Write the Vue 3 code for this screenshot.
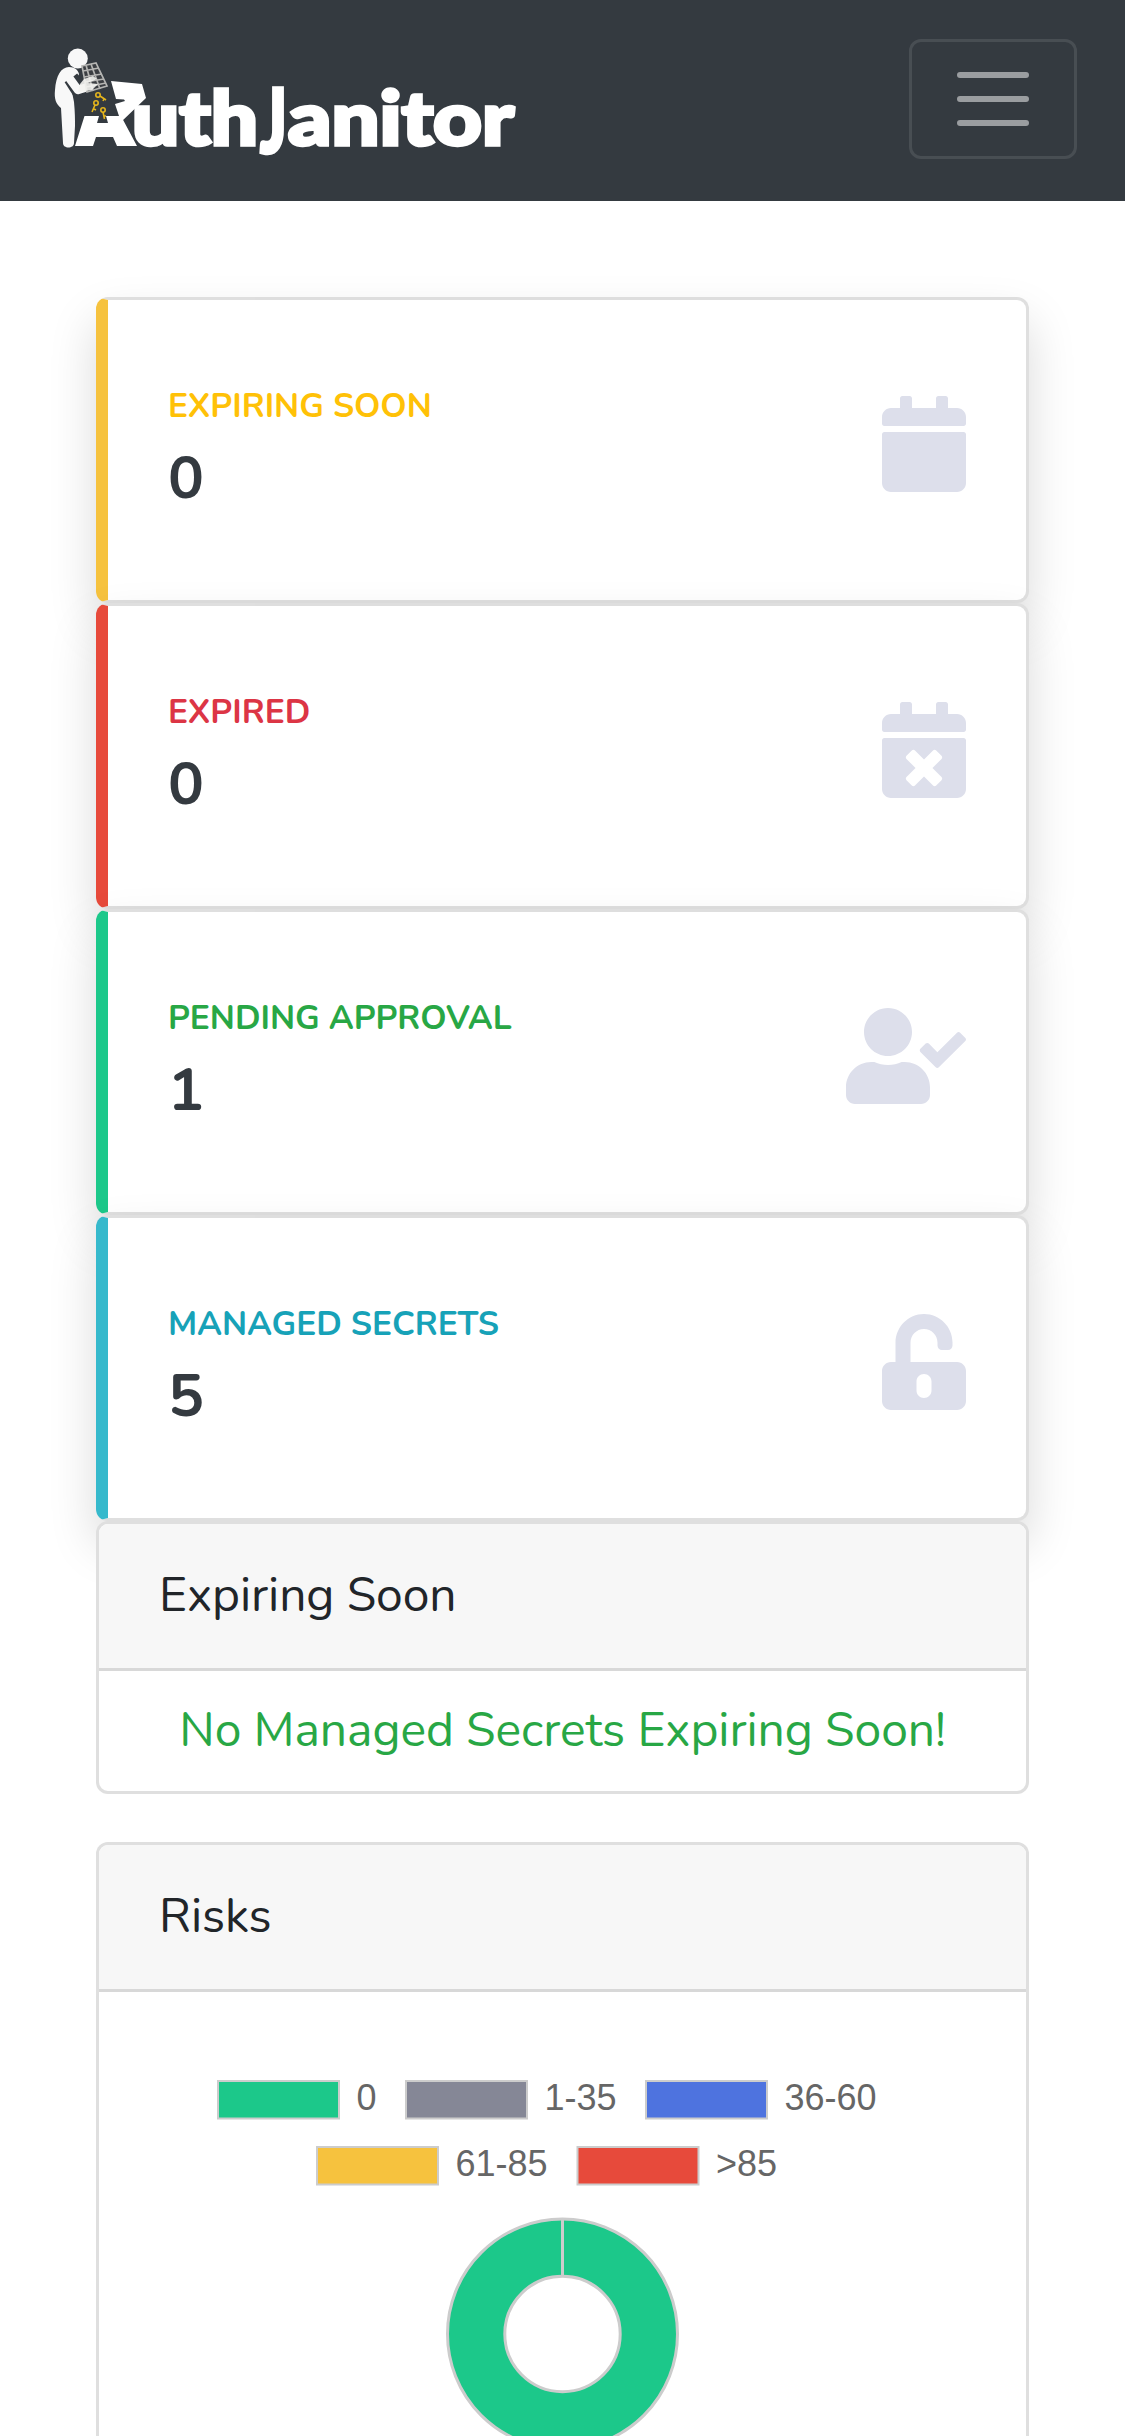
<script setup>
const icons = {
  calendar: 'M12 192h424c6.6 0 12 5.4 12 12v260c0 26.5-21.5 48-48 48H48c-26.5 0-48-21.5-48-48V204c0-6.6 5.4-12 12-12zm436-44v-36c0-26.5-21.5-48-48-48h-48V12c0-6.6-5.4-12-12-12h-40c-6.6 0-12 5.4-12 12v52H160V12c0-6.6-5.4-12-12-12h-40c-6.6 0-12 5.4-12 12v52H48C21.5 64 0 85.5 0 112v36c0 6.6 5.4 12 12 12h424c6.6 0 12-5.4 12-12z',
  calendarTimes: 'M436 160H12c-6.6 0-12-5.4-12-12v-36c0-26.5 21.5-48 48-48h48V12c0-6.6 5.4-12 12-12h40c6.6 0 12 5.4 12 12v52h128V12c0-6.6 5.4-12 12-12h40c6.6 0 12 5.4 12 12v52h48c26.5 0 48 21.5 48 48v36c0 6.6-5.4 12-12 12zM12 192h424c6.6 0 12 5.4 12 12v260c0 26.5-21.5 48-48 48H48c-26.5 0-48-21.5-48-48V204c0-6.6 5.4-12 12-12zm257.3 160l48.1-48.1c4.7-4.7 4.7-12.3 0-17l-28.3-28.3c-4.7-4.7-12.3-4.7-17 0L224 306.7l-48.1-48.1c-4.7-4.7-12.3-4.7-17 0l-28.3 28.3c-4.7 4.7-4.7 12.3 0 17l48.1 48.1-48.1 48.1c-4.7 4.7-4.7 12.3 0 17l28.3 28.3c4.7 4.7 12.3 4.7 17 0l48.1-48.1 48.1 48.1c4.7 4.7 12.3 4.7 17 0l28.3-28.3c4.7-4.7 4.7-12.3 0-17L269.3 352z',
  userCheck: 'M224 256c70.7 0 128-57.3 128-128S294.7 0 224 0 96 57.3 96 128s57.3 128 128 128zm89.6 32h-16.7c-22.2 10.2-46.9 16-72.9 16s-50.6-5.8-72.9-16h-16.7C60.2 288 0 348.2 0 422.4V464c0 26.5 21.5 48 48 48h352c26.5 0 48-21.5 48-48v-41.6c0-74.2-60.2-134.4-134.4-134.4zm323-128.4l-27.8-28.1c-4.6-4.7-12.1-4.7-16.8-.1l-104.8 104-45.5-45.8c-4.6-4.7-12.1-4.7-16.8-.1l-28.1 27.9c-4.7 4.6-4.7 12.1-.1 16.8l81.7 82.3c4.6 4.7 12.1 4.7 16.8.1l141.3-140.2c4.6-4.7 4.7-12.2.1-16.8z',
  unlock: 'M400 256H152V152.9c0-39.6 31.7-72.5 71.3-72.9 40-.4 72.7 32.1 72.7 72v16c0 13.3 10.7 24 24 24h32c13.3 0 24-10.7 24-24v-16C376 68 307.5-.3 223.5 0 139.5.3 72 69.5 72 153.5V256H48c-26.5 0-48 21.5-48 48v160c0 26.5 21.5 48 48 48h352c26.5 0 48-21.5 48-48V304c0-26.5-21.5-48-48-48zM264 408c0 22.1-17.9 40-40 40s-40-17.9-40-40v-48c0-22.1 17.9-40 40-40s40 17.9 40 40v48z',
}
const stats = [
  { label: 'Expiring Soon', value: 0, tone: 'warning', icon: icons.calendar, w: 448 },
  { label: 'Expired', value: 0, tone: 'danger', icon: icons.calendarTimes, w: 448 },
  { label: 'Pending Approval', value: 1, tone: 'success', icon: icons.userCheck, w: 640 },
  { label: 'Managed Secrets', value: 5, tone: 'info', icon: icons.unlock, w: 448 },
]
// chart coordinates are relative to the chart's own viewBox
const legend = [
  { text: '0', color: '#1cc88a', x: 119, y: 89 },
  { text: '1-35', color: '#858796', x: 307, y: 89 },
  { text: '36-60', color: '#4e73df', x: 547, y: 89 },
  { text: '61-85', color: '#f6c23e', x: 218, y: 155 },
  { text: '>85', color: '#e74a3b', x: 478.5, y: 155 },
]
</script>

<template>
  <div class="page">
    <header class="navbar">
      <svg class="brand" width="490" height="180" viewBox="45 15 490 180" role="img" aria-label="AuthJanitor">
        <g fill="#f8f8f8">
          <circle cx="77.8" cy="58.5" r="10" />
          <path d="M55 90C56 76 61 67 69 67C75 67 78 70 79 74L72 92L74 102C75 112 75 120 75 126L74 143C74 149 63 149 63 143L61 108C56 104 54 99 55 90Z" />
        </g>
        <path d="M68 80L76 92.500L97 87M74 76L82 86L95 80" fill="none" stroke="#343a40" stroke-width="8" stroke-linejoin="round" />
        <path d="M70 79L78 90L97 84" fill="none" stroke="#f8f8f8" stroke-width="8.500" stroke-linejoin="round" stroke-linecap="round" />
        <g fill="#3b3e42" stroke="#b5b5b3" stroke-width="1.700">
          <path d="M82 66L96 63L107 86L87 92Z" />
          <path d="M86 65L93 91M91 64L100 89M83 71L99 68M84 77L102 74M85 82L104 79M86 87L106 83" fill="none" />
        </g>
        <path d="M84 79L93 76L97 79L88 83L98 84L92 90L78 92L80 84Z" fill="#f3f3f0" fill-opacity=".9" />
        <path d="M111 81L142 84L146 98L121 122L115 104L125 101L124 99.500L116 99Z" fill="#fff" />
        <path d="M84.500 116H99L97 123H108L106 116H121L137 146H117L113 137H96L93 146H75Z" fill="#fff" />
        <g fill="none" stroke="#e5b51c" stroke-width="1.600">
          <circle cx="98" cy="95" r="2.200" /><path d="M100 96L106 100M104 99L103 101" />
          <circle cx="96" cy="103" r="2.200" /><path d="M95 105L92 112M94 109L96 110" />
          <circle cx="103" cy="110" r="2.200" /><path d="M103 112L104.500 119M104 116L106 116" />
        </g>
        <g class="wordmark">
          <text y="145" x="132" font-size="75" textLength="126" lengthAdjust="spacingAndGlyphs">uth</text>
          <text y="153" x="260" font-size="90" textLength="27" lengthAdjust="spacingAndGlyphs">J</text>
          <text y="145" x="288" font-size="75" textLength="226" lengthAdjust="spacingAndGlyphs">anitor</text>
        </g>
      </svg>
      <button class="toggler" aria-label="Toggle navigation">
        <span></span><span></span><span></span>
      </button>
    </header>

    <main class="content">
      <section v-for="s in stats" :key="s.label" class="card stat" :class="s.tone">
        <div>
          <div class="label">{{ s.label }}</div>
          <div class="value">{{ s.value }}</div>
        </div>
        <svg class="icon" :viewBox="`0 0 ${s.w} 512`"><path :d="s.icon" /></svg>
      </section>

      <section class="card">
        <h2 class="card-header">Expiring Soon</h2>
        <p class="empty">No Managed Secrets Expiring Soon!</p>
      </section>

      <section class="card risks">
        <h2 class="card-header">Risks</h2>
        <svg class="chart" width="927" height="480" viewBox="0 0 927 480">
          <g v-for="l in legend" :key="l.text">
            <rect :x="l.x" :y="l.y" width="121" height="37.500" :fill="l.color" stroke="#ccc" stroke-width="2" />
            <text :x="l.x + 138.500" :y="l.y + 29">{{ l.text }}</text>
          </g>
          <g fill="none" stroke="#ccc" stroke-width="3">
            <circle cx="463.500" cy="342" r="86.300" stroke="#1cc88a" stroke-width="57" />
            <circle cx="463.500" cy="342" r="115" />
            <circle cx="463.500" cy="342" r="57.700" />
            <path d="M463.500 227V284" />
          </g>
        </svg>
      </section>
    </main>
  </div>
</template>

<style>
body { margin: 0; background: #fff; }
</style>

<style scoped>
.page { height: 2436px; overflow: hidden; font-family: Nunito, Lato, "Noto Sans", sans-serif; color: #212529; }
.navbar { box-sizing: border-box; height: 201px; padding: 15px 48px 0 45px; display: flex; justify-content: space-between; align-items: flex-start; background: #343a40; }
.brand { display: block; }
.wordmark { font-family: Lato, sans-serif; font-weight: 900; fill: #fff; stroke: #fff; stroke-width: 3.5; stroke-linejoin: miter; }
.toggler { box-sizing: border-box; width: 168px; height: 120px; margin-top: 24px; padding: 0; display: flex; flex-direction: column; align-items: center; justify-content: center; gap: 18px; background: none; border: 3px solid rgba(255, 255, 255, .1); border-radius: 12px; }
.toggler span { width: 72px; height: 6px; border-radius: 3px; background: #9a9da0; }
.content { padding: 96px 96px 0; }
.card { box-sizing: border-box; background: #fff; background-clip: border-box; border: 3px solid rgba(0, 0, 0, .125); border-radius: 12px; overflow: hidden; }
.stat { height: 306px; padding: 0 60px; border-left-width: 12px; display: flex; justify-content: space-between; align-items: center; box-shadow: 0 24px 48px rgba(0, 0, 0, .15); }
.icon { height: 96px; fill: #dddfeb; position: relative; top: -6px; }
.label { font-size: 33.6px; font-weight: 700; line-height: 48px; padding-bottom: 2px; letter-spacing: -.04px; text-transform: uppercase; white-space: nowrap; }
.value { height: 86px; font-size: 60px; font-weight: 700; line-height: 92px; color: #343a40; }
.warning { border-left-color: #f6c23e; }
.warning .label { color: #ffc107; }
.danger { border-left-color: #e74a3b; }
.danger .label { color: #dc3545; }
.success { border-left-color: #1cc88a; }
.success .label { color: #28a745; }
.info { border-left-color: #36b9cc; }
.info .label { color: #17a2b8; }
.card-header { box-sizing: border-box; height: 147px; margin: 0; padding: 35px 60px 0; font-size: 48px; font-weight: 400; line-height: 72px; letter-spacing: -.08px; background: #f7f7f7; border-bottom: 3px solid rgba(0, 0, 0, .125); }
.empty { box-sizing: border-box; height: 120px; margin: 0; padding-top: 23px; text-align: center; font-size: 48px; line-height: 72px; letter-spacing: -.08px; color: #28a745; white-space: nowrap; }
.risks { height: 660px; margin-top: 48px; }
.chart { display: block; }
.chart text { font: 36px "Liberation Sans", Arial, sans-serif; fill: #666; }
</style>
